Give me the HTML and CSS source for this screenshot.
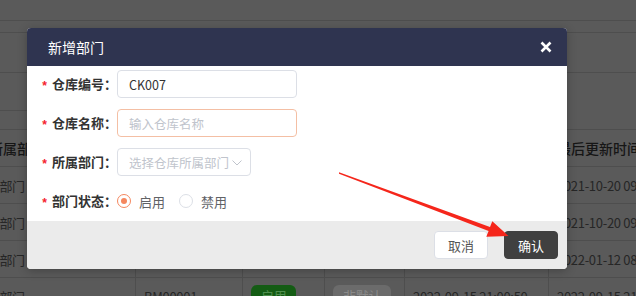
FILE: index.html
```html
<!DOCTYPE html>
<html lang="zh-CN">
<head>
<meta charset="utf-8">
<title>新增部门</title>
<link rel="stylesheet" href="styles.css">
</head>
<body>
<div class="page">
  <div class="topbar"></div>
  <div class="tabs"></div>
  <div class="toolbar"></div>
  <div class="filters"><div class="filter-side"></div></div>
  <div class="table">
    <div class="row head">
      <div class="cell c1">所属部门</div>
      <div class="cell"></div>
      <div class="cell"></div>
      <div class="cell"></div>
      <div class="cell"></div>
      <div class="cell"></div>
      <div class="cell">最后更新时间</div>
    </div>
    <div class="row">
      <div class="cell c1">销售部门</div>
      <div class="cell"></div>
      <div class="cell"></div>
      <div class="cell"></div>
      <div class="cell"></div>
      <div class="cell"></div>
      <div class="cell">2021-10-20 09:12:30</div>
    </div>
    <div class="row">
      <div class="cell c1">默认部门</div>
      <div class="cell"></div>
      <div class="cell"></div>
      <div class="cell"></div>
      <div class="cell"></div>
      <div class="cell"></div>
      <div class="cell">2021-10-20 09:10:02</div>
    </div>
    <div class="row">
      <div class="cell c1">生产部门</div>
      <div class="cell"></div>
      <div class="cell"></div>
      <div class="cell"></div>
      <div class="cell"></div>
      <div class="cell"></div>
      <div class="cell">2022-01-12 08:30:41</div>
    </div>
    <div class="row">
      <div class="cell c1">采购部门</div>
      <div class="cell"></div>
      <div class="cell">BM00001</div>
      <div class="cell"><span class="badge on">启用</span></div>
      <div class="cell"><span class="badge off">非默认</span></div>
      <div class="cell">2022-09-15 21:00:50</div>
      <div class="cell">2022-09-15 21:00:50</div>
    </div>
  </div>
</div>

<div class="modal">
  <div class="modal-header">
    <span class="modal-title">新增部门</span>
    <svg class="close" width="12" height="12" viewBox="0 0 12 12"><path d="M1.5 1.5L10.5 10.5M10.5 1.5L1.5 10.5" stroke="#fff" stroke-width="2.6" fill="none"/></svg>
  </div>
  <div class="modal-body">
    <div class="form-row">
      <label class="label"><span class="required">*</span>仓库编号：</label>
      <div class="input">CK007</div>
    </div>
    <div class="form-row">
      <label class="label"><span class="required">*</span>仓库名称：</label>
      <div class="input focus placeholder">输入仓库名称</div>
    </div>
    <div class="form-row">
      <label class="label"><span class="required">*</span>所属部门：</label>
      <div class="input select placeholder"><span>选择仓库所属部门</span><svg class="chev" width="10" height="6" viewBox="0 0 10 6"><path d="M0.5 0.5L5 5L9.5 0.5" stroke="#c0c4cc" stroke-width="1" fill="none"/></svg></div>
    </div>
    <div class="form-row">
      <label class="label"><span class="required">*</span>部门状态：</label>
      <div class="radios">
        <span class="radio"><span class="dot checked"></span>启用</span>
        <span class="radio"><span class="dot"></span>禁用</span>
      </div>
    </div>
  </div>
  <div class="modal-footer">
    <button class="btn cancel">取消</button>
    <button class="btn confirm">确认</button>
  </div>
</div>

<svg class="arrow" width="636" height="296" viewBox="0 0 636 296">
  <polygon points="339,172.2 490,227.1 492.3,221.3 508.5,236 486.3,236.8 488.6,230.9 339,173.8" fill="#f5261b"/>
</svg>
</body>
</html>
```

FILE: styles.css
```css
html, body {
  margin: 0;
  padding: 0;
}
body {
  width: 636px;
  height: 296px;
  overflow: hidden;
  position: relative;
  background: #5a5a5a;
  font-family: "Noto Sans CJK SC", sans-serif;
}

/* background page (dimmed) */
.page {
  width: 636px;
  height: 296px;
  overflow: hidden;
  background: #5a5a5a;
}
.topbar {
  height: 20px;
  border-bottom: 1px solid #4e4e4e;
}
.tabs {
  height: 11px;
  border-bottom: 1px solid #4e4e4e;
}
.toolbar {
  height: 39px;
  border-bottom: 1px solid #4e4e4e;
}
.filters {
  height: 56px;
  border-bottom: 1px solid #4e4e4e;
}
.filter-side {
  width: 40px;
  height: 37px;
  border-bottom: 1px solid #4e4e4e;
}
.table {
  margin-left: -26px;
  width: 740px;
}
.row {
  display: grid;
  grid-template-columns: 94px 68px 107px 82px 80px 144px 165px;
  height: 36px;
  border-bottom: 1px solid #4e4e4e;
  color: #262626;
  font-size: 13px;
}
.row.head {
  color: #161616;
  font-size: 14px;
  font-weight: 500;
}
.cell {
  display: flex;
  align-items: center;
  padding: 0 8px;
  border-right: 1px solid #4e4e4e;
  white-space: nowrap;
  overflow: hidden;
}
.cell.c1 {
  padding-left: 0;
  border-right: none;
}
.row.head .cell.c1 {
  justify-content: center;
}
.row:not(.head) .cell {
  letter-spacing: -0.3px;
}
.badge {
  display: inline-block;
  padding: 0 10px;
  height: 22px;
  line-height: 22px;
  border-radius: 6px;
  font-size: 13px;
}
.badge.on {
  background: #145c14;
  color: #4f8f4f;
}
.badge.off {
  background: #6b6b6b;
  color: #8a8a8a;
}

/* modal */
.modal {
  position: absolute;
  left: 27px;
  top: 28px;
  width: 540px;
  border-radius: 4px;
  overflow: hidden;
  background: #fff;
  box-shadow: 0 2px 10px rgba(0, 0, 0, 0.25);
}
.modal-header {
  height: 38px;
  background: #2f3450;
  display: flex;
  align-items: center;
  justify-content: space-between;
  padding: 0 15px 0 21px;
  color: #fff;
  font-size: 14px;
}
.close {
  display: block;
}
.modal-body {
  padding: 4px 0 6px;
  display: flex;
  flex-direction: column;
  gap: 11px;
}
.form-row {
  display: flex;
  align-items: center;
  height: 28px;
}
.label {
  width: 90px;
  text-align: right;
  font-size: 13px;
  font-weight: bold;
  color: #333;
  line-height: 28px;
  white-space: nowrap;
}
.required {
  display: inline-block;
  color: #f5222d;
  font-family: "Liberation Sans", sans-serif;
  font-size: 12px;
  line-height: 1;
  margin-right: 5px;
  transform: translateY(1px);
}
.input {
  width: 180px;
  height: 28px;
  box-sizing: border-box;
  border: 1px solid #dcdfe6;
  border-radius: 4px;
  padding: 0 11px;
  display: flex;
  align-items: center;
  font-size: 12.5px;
  color: #333;
  white-space: nowrap;
}
.input.focus {
  border-color: #f4bfa4;
}
.input.placeholder {
  color: #c0c4cc;
}
.input.select {
  width: 134px;
  padding-right: 7px;
  gap: 3px;
}
.chev {
  display: block;
  flex: none;
  margin-top: 1px;
}
.radios {
  display: flex;
  align-items: center;
  gap: 14px;
}
.radio {
  display: flex;
  align-items: center;
  gap: 8px;
  font-size: 13px;
  color: #606266;
}
.dot {
  width: 14px;
  height: 14px;
  box-sizing: border-box;
  border: 1px solid #dcdfe6;
  border-radius: 50%;
  display: flex;
  align-items: center;
  justify-content: center;
}
.dot.checked {
  border-color: #f5875e;
}
.dot.checked::after {
  content: "";
  width: 6px;
  height: 6px;
  border-radius: 50%;
  background: #f5875e;
}
.modal-footer {
  height: 48px;
  background: #ebebeb;
  display: flex;
  justify-content: flex-end;
  align-items: center;
  gap: 16px;
  padding-right: 9px;
}
.btn {
  width: 54px;
  height: 28px;
  box-sizing: border-box;
  border-radius: 4px;
  font-family: "Noto Sans CJK SC", sans-serif;
  font-size: 13px;
  padding: 0;
  cursor: pointer;
}
.btn.cancel {
  background: #fff;
  border: 1px solid #dcdfe6;
  color: #555;
}
.btn.confirm {
  background: #404040;
  border: 1px solid #404040;
  color: #fff;
}

.arrow {
  position: absolute;
  left: 0;
  top: 0;
  pointer-events: none;
}
```
